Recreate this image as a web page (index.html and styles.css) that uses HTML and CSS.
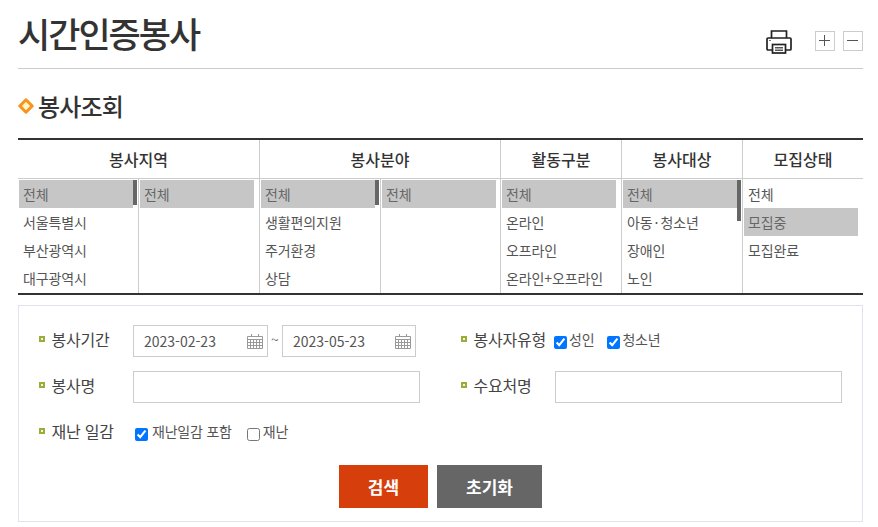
FILE: index.html
```html
<!DOCTYPE html>
<html lang="ko">
<head>
<meta charset="utf-8">
<title>시간인증봉사</title>
<link rel="stylesheet" href="styles.css">
</head>
<body>

<div class="page-head">
  <h1 class="page-title">시간인증봉사</h1>
  <div class="page-tools">
    <svg class="print-icon" width="26" height="24" viewBox="0 0 26 24" fill="none" stroke="#222" stroke-width="1.700">
      <path d="M5.500 8V1h15v7"/>
      <path d="M6 20H2a1 1 0 0 1-1-1V9a1 1 0 0 1 1-1h22a1 1 0 0 1 1 1v10a1 1 0 0 1-1 1h-4"/>
      <rect x="6.500" y="14.500" width="13" height="8.500" fill="#fff"/>
      <path d="M9 17.800h8M9 20.300h8" stroke-width="1.400" stroke="#555"/>
      <path d="M3 10.500h2" stroke-width="1" stroke="#777"/>
    </svg>
    <span class="zoom-btns">
      <button class="zoom-btn" type="button"><svg width="12" height="12" viewBox="0 0 12 12" stroke="#555"><path d="M0 5.500h11M5.500 0v11"/></svg></button>
      <button class="zoom-btn" type="button"><svg width="12" height="12" viewBox="0 0 12 12" stroke="#555"><path d="M0 5.500h11"/></svg></button>
    </span>
  </div>
</div>

<h2 class="section-title">
  <svg width="16" height="16" viewBox="0 0 16 16"><path d="M8 1.800 14.200 8 8 14.200 1.800 8Z" fill="#fff6c4" stroke="#f7931e" stroke-width="3" stroke-linejoin="round"/></svg>
  봉사조회
</h2>

<div class="filter-table">
  <div class="filter-head span2">봉사지역</div>
  <div class="filter-head span2">봉사분야</div>
  <div class="filter-head">활동구분</div>
  <div class="filter-head">봉사대상</div>
  <div class="filter-head last">모집상태</div>

  <ul class="filter-list">
    <li class="on">전체</li>
    <li>서울특별시</li>
    <li>부산광역시</li>
    <li>대구광역시</li>
    <span class="thumb"></span>
  </ul>
  <ul class="filter-list">
    <li class="on">전체</li>
  </ul>
  <ul class="filter-list">
    <li class="on">전체</li>
    <li>생활편의지원</li>
    <li>주거환경</li>
    <li>상담</li>
    <span class="thumb"></span>
  </ul>
  <ul class="filter-list">
    <li class="on">전체</li>
  </ul>
  <ul class="filter-list">
    <li class="on">전체</li>
    <li>온라인</li>
    <li>오프라인</li>
    <li>온라인+오프라인</li>
  </ul>
  <ul class="filter-list">
    <li class="on">전체</li>
    <li>아동<span class="dot">·</span>청소년</li>
    <li>장애인</li>
    <li>노인</li>
    <span class="thumb long"></span>
  </ul>
  <ul class="filter-list last">
    <li>전체</li>
    <li class="on">모집중</li>
    <li>모집완료</li>
  </ul>
</div>

<form class="search-box">
  <div class="search-row">
    <div class="field">
      <label class="field-label">봉사기간</label>
      <div class="date-box">
        <input class="date-input" type="text" value="2023-02-23">
        <svg class="cal-icon" width="16" height="15" viewBox="0 0 16 15" fill="none" stroke="#999"><path d="M.5 2.500h15v12H.5zM.5 5.500h15M.5 8.500h15M.5 11.500h15M3.500 5v9M6.500 5v9M9.500 5v9M12.500 5v9M4.500 0v3M11.500 0v3"/></svg>
      </div>
      <span class="tilde">~</span>
      <div class="date-box">
        <input class="date-input" type="text" value="2023-05-23">
        <svg class="cal-icon" width="16" height="15" viewBox="0 0 16 15" fill="none" stroke="#999"><path d="M.5 2.500h15v12H.5zM.5 5.500h15M.5 8.500h15M.5 11.500h15M3.500 5v9M6.500 5v9M9.500 5v9M12.500 5v9M4.500 0v3M11.500 0v3"/></svg>
      </div>
    </div>
    <div class="field">
      <label class="field-label">봉사자유형</label>
      <div class="check-group type-checks">
        <label class="check"><input type="checkbox" checked>성인</label>
        <label class="check"><input type="checkbox" checked>청소년</label>
      </div>
    </div>
  </div>

  <div class="search-row">
    <div class="field">
      <label class="field-label">봉사명</label>
      <input class="text-input" type="text">
    </div>
    <div class="field">
      <label class="field-label">수요처명</label>
      <input class="text-input" type="text">
    </div>
  </div>

  <div class="search-row">
    <div class="field">
      <label class="field-label">재난 일감</label>
      <div class="check-group disaster-checks">
        <label class="check"><input type="checkbox" checked>재난일감 포함</label>
        <label class="check"><input type="checkbox">재난</label>
      </div>
    </div>
  </div>

  <div class="search-btns">
    <button class="btn btn-search" type="button">검색</button>
    <button class="btn btn-reset" type="button">초기화</button>
  </div>
</form>

</body>
</html>
```

FILE: styles.css
```css
* {
  box-sizing: border-box;
}

body {
  margin: 0;
  padding: 0 15px 0 18px;
  background: #fff;
  color: #333;
  font-family: "Noto Sans CJK KR", "Noto Sans", sans-serif;
  font-size: 14px;
}

/* Page title */
.page-head {
  display: flex;
  justify-content: space-between;
  height: 69px;
  border-bottom: 1px solid #ccc;
}

.page-title {
  margin: 0;
  font-size: 35px;
  font-weight: 500;
  line-height: 65px;
  letter-spacing: -2px;
  color: #333;
}

.page-tools {
  display: flex;
  padding-top: 30px;
}

.print-icon {
  margin-right: 23px;
}

.zoom-btns {
  display: flex;
  gap: 8px;
  padding-top: 1px;
}

.zoom-btn {
  display: flex;
  align-items: center;
  justify-content: center;
  width: 20px;
  height: 20px;
  padding: 0;
  border: 1px solid #ccc;
  background: #fff;
}

/* Section title */
.section-title {
  display: flex;
  align-items: center;
  gap: 4px;
  height: 69px;
  margin: 0;
  padding-top: 4px;
  font-size: 24px;
  font-weight: 500;
  letter-spacing: -0.8px;
  color: #333;
}

/* Filter table */
.filter-table {
  display: grid;
  grid-template-columns: 121px 121px 121px 120px 121px 121px 120px;
  grid-template-rows: 39px 114px;
  border-top: 2px solid #333;
  border-bottom: 2px solid #333;
}

.filter-head {
  border-right: 1px solid #ccc;
  border-bottom: 1px solid #ccc;
  font-size: 16px;
  font-weight: 500;
  line-height: 38px;
  text-align: center;
  color: #333;
}

.filter-head.span2 {
  grid-column: span 2;
}

.filter-head.last,
.filter-list.last {
  border-right: 0;
}

.filter-list {
  position: relative;
  margin: 0;
  padding: 1px 0 0 1px;
  overflow: hidden;
  border-right: 1px solid #ccc;
  list-style: none;
}

.filter-list li {
  width: 114px;
  height: 28px;
  padding-left: 4px;
  line-height: 28px;
  letter-spacing: -0.1px;
  color: #555;
  white-space: nowrap;
}

.filter-list li.on {
  background: #c6c6c6;
  color: #666;
}

.dot {
  padding: 0 2px;
}

.thumb {
  position: absolute;
  top: 1px;
  right: 1px;
  width: 4px;
  height: 25px;
  background: #666;
}

.thumb.long {
  height: 41px;
}

/* Search form */
.search-box {
  height: 217px;
  margin-top: 10px;
  padding: 19px 0 0 20px;
  border: 1px solid #e2e2ec;
}

.search-row {
  display: grid;
  grid-template-columns: 422px 1fr;
  height: 32px;
  margin-bottom: 14px;
}

.field {
  display: flex;
  align-items: center;
}

.field-label {
  display: flex;
  align-items: center;
  gap: 6.500px;
  width: 94px;
  flex: none;
  padding-bottom: 4px;
  font-size: 16px;
  letter-spacing: -0.2px;
  color: #444;
  white-space: nowrap;
}

.field-label:before {
  content: "";
  box-sizing: border-box;
  width: 6px;
  height: 6px;
  border: 2px solid #9aac3a;
  background: #f4f6e0;
}

.date-box {
  position: relative;
  width: 135px;
  height: 32px;
}

.date-box + .tilde + .date-box {
  width: 134px;
}

.date-input {
  width: 100%;
  height: 100%;
  padding: 0 0 0 10px;
  border: 1px solid #ccc;
  font-family: inherit;
  font-size: 14px;
  color: #555;
}

.cal-icon {
  position: absolute;
  top: 9px;
  right: 5px;
}

.tilde {
  width: 14px;
  padding-bottom: 4px;
  color: #666;
  text-align: center;
}

.text-input {
  width: 287px;
  height: 32px;
  border: 1px solid #ccc;
}

/* Checkboxes sit a little lower than their text */
.check-group {
  display: flex;
  padding-bottom: 4px;
}

.check {
  display: flex;
  align-items: flex-start;
  letter-spacing: -0.2px;
  color: #555;
  white-space: nowrap;
  line-height: 20px;
}

.check input {
  margin: 7px 2px 0 0;
}

.type-checks {
  margin-left: -1px;
}

.type-checks .check {
  margin-right: 13px;
}

.disaster-checks {
  padding-left: 2px;
}

.disaster-checks .check {
  margin-right: 15px;
}

.disaster-checks input {
  margin-right: 4px;
}

.disaster-checks .check + .check input {
  margin-right: 3px;
}

/* Buttons */
.search-btns {
  display: flex;
  justify-content: center;
  gap: 9px;
  margin: 16px 0 0 -20px;
}

.btn {
  height: 43px;
  border: 0;
  font-family: inherit;
  font-size: 17px;
  font-weight: 700;
  color: #fff;
}

.btn-search {
  width: 89px;
  background: #d63f0c;
}

.btn-reset {
  width: 105px;
  background: #666;
}
```
